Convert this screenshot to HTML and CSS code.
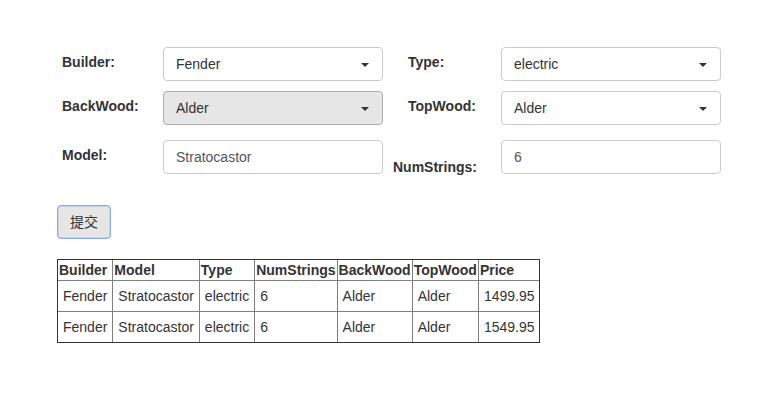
FILE: index.html
```html
<!DOCTYPE html>
<html>
<head>
<meta charset="utf-8">
<link rel="stylesheet" href="styles.css">
</head>
<body>
<div class="page">
  <div class="form">
    <div class="row row1">
      <div class="label">Builder:</div>
      <div class="select"><span>Fender</span><i class="caret"></i></div>
      <div class="label label-r">Type:</div>
      <div class="select"><span>electric</span><i class="caret"></i></div>
    </div>
    <div class="row row2">
      <div class="label">BackWood:</div>
      <div class="select active"><span>Alder</span><i class="caret"></i></div>
      <div class="label label-r">TopWood:</div>
      <div class="select"><span>Alder</span><i class="caret"></i></div>
    </div>
    <div class="row row3">
      <div class="label">Model:</div>
      <div class="input">Stratocastor</div>
      <div class="label label-r label-low">NumStrings:</div>
      <div class="input">6</div>
    </div>
  </div>
  <button class="btn" type="button">提交</button>
  <table class="grid">
    <tr><th>Builder</th><th>Model</th><th>Type</th><th>NumStrings</th><th>BackWood</th><th>TopWood</th><th>Price</th></tr>
    <tr><td>Fender</td><td>Stratocastor</td><td>electric</td><td>6</td><td>Alder</td><td>Alder</td><td>1499.95</td></tr>
    <tr><td>Fender</td><td>Stratocastor</td><td>electric</td><td>6</td><td>Alder</td><td>Alder</td><td>1549.95</td></tr>
  </table>
</div>
</body>
</html>
```
FILE: styles.css
```css
html, body {
  margin: 0;
  padding: 0;
  background: #fff;
}
body {
  font-family: "Liberation Sans", Arial, "Noto Sans CJK SC", sans-serif;
  font-size: 14px;
  line-height: 20px;
  color: #333;
}
.page {
  padding: 47px 0 0 57px;
}
.form {
  padding-left: 5px;
}
.row {
  display: flex;
  align-items: flex-start;
}
.row2 { margin-top: 10px; }
.row3 { margin-top: 15px; }
.label {
  width: 101px;
  font-weight: bold;
  padding-top: 5px;
  white-space: nowrap;
}
.label-r {
  width: 93px;
  margin-left: 25px;
}
.label-low {
  padding-top: 17px;
  margin-left: 10px;
  width: 108px;
}
.select, .input {
  box-sizing: border-box;
  width: 220px;
  height: 34px;
  padding: 6px 12px;
  border: 1px solid #ccc;
  border-radius: 4px;
  background: #fff;
  position: relative;
  color: #333;
}
.input {
  color: #555;
}
.select.active {
  background: #e6e6e6;
  border-color: #adadad;
}
.caret {
  position: absolute;
  right: 13px;
  top: 15px;
  width: 0;
  height: 0;
  border-top: 4px solid #333;
  border-left: 4px solid transparent;
  border-right: 4px solid transparent;
}
.btn {
  display: block;
  margin-top: 28px;
  box-sizing: border-box;
  height: 34px;
  padding: 6px 12px;
  font-family: "Liberation Sans", Arial, "Noto Sans CJK SC", sans-serif;
  font-size: 14px;
  line-height: 20px;
  color: #333;
  background: #e6e6e6;
  border: 1px solid #86a8de;
  border-radius: 4px;
  box-shadow: inset 0 0 0 1px #c9d6ec;
}
.grid {
  margin-top: 20px;
  border-collapse: separate;
  border-spacing: 0;
  border: 1px solid #333;
}
.grid th, .grid td {
  border-left: 1px solid #808080;
  border-top: 1px solid #808080;
  text-align: left;
  white-space: nowrap;
}
.grid tr th:first-child, .grid tr td:first-child {
  border-left: 0;
}
.grid tr:first-child th {
  border-top: 0;
}
.grid th {
  padding: 0 1px;
  font-weight: bold;
  color: #333;
}
.grid td {
  padding: 5px 5px;
}
```
